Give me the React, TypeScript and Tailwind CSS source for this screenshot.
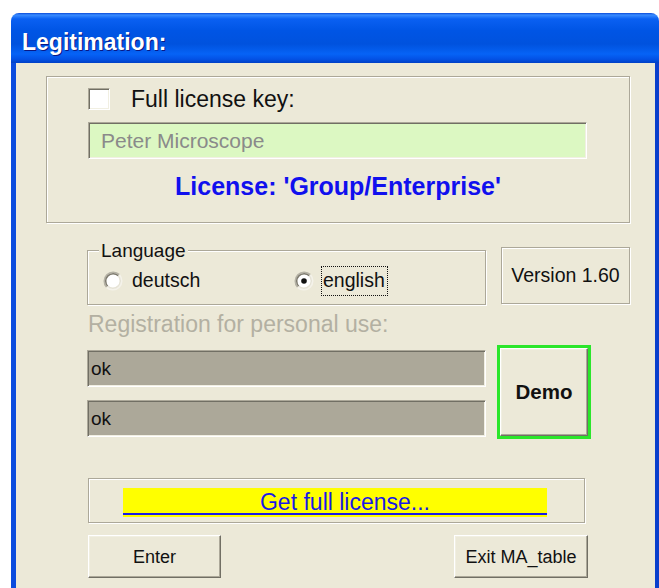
import type { ReactNode } from 'react';

// classic 3D frames
const sunken =
  'border border-t-[#ACA899] border-l-[#ACA899] border-b-white border-r-white shadow-[inset_1px_1px_0_#716F64,inset_-1px_-1px_0_#F1EFE2]';
const raised =
  'border border-t-white border-l-white border-b-[#716F64] border-r-[#716F64] shadow-[inset_-1px_-1px_0_#ACA899,inset_1px_1px_0_#F1EFE2]';
const etched = 'border border-[#ACA899] shadow-[1px_1px_0_#fff,inset_1px_1px_0_#fff]';

function Radio({ checked = false }: { checked?: boolean }) {
  return (
    <svg width="20" height="20" viewBox="0 0 20 20" className="shrink-0">
      <circle cx="10" cy="10" r="8.5" fill="#fff" />
      <path d="M3.64 16.36A9 9 0 0 1 16.36 3.64" fill="none" stroke="#B5B2A5" strokeWidth="1.5" />
      <path d="M16.36 3.64A9 9 0 0 1 3.64 16.36" fill="none" stroke="#F4F2EA" strokeWidth="1.5" />
      <path d="M4.7 15.3A7.5 7.5 0 0 1 15.3 4.7" fill="none" stroke="#7D7A6D" strokeWidth="1.5" />
      <path d="M15.3 4.7A7.5 7.5 0 0 1 4.7 15.3" fill="none" stroke="#E6E3D6" strokeWidth="1.5" />
      {checked && <circle cx="10" cy="10" r="2.8" fill="#111" />}
    </svg>
  );
}

function Button({ children, className = '' }: { children: ReactNode; className?: string }) {
  return (
    <button className={`flex h-[43px] items-center justify-center bg-[#ECE9D8] text-[18px] leading-none ${raised} ${className}`}>
      {children}
    </button>
  );
}

export default function App() {
  return (
    <div className="h-[588px] overflow-hidden bg-white pl-[11px] pt-[13px] font-['Liberation_Sans',Arial,sans-serif] text-[#111]">
      <div className="flex h-[575px] w-[648px] flex-col overflow-hidden rounded-t-[8px]">
        {/* caption */}
        <div className="flex h-[50px] shrink-0 items-center bg-[linear-gradient(to_bottom,#0A4AD8_0%,#3A8CFF_4%,#0A60F2_12%,#0055E5_35%,#0052DE_62%,#0663F6_82%,#0352E6_92%,#0040C6_100%)] pl-[11px] pt-[8px] text-[23px] font-bold leading-none text-white [text-shadow:1px_1px_0_#0A1883]">
          Legitimation:
        </div>

        <div className="flex-1 border-l-[5px] border-r-[4px] border-l-[#0B4CDE] border-r-[#0A3FCC] bg-[#ECE9D8] pt-[13px]">
          {/* license key group */}
          <div className={`ml-[30px] h-[147px] w-[584px] pt-[11px] ${etched}`}>
            <label className="ml-[41px] flex h-[22px] items-center gap-[21px]">
              <span className={`h-[22px] w-[22px] bg-white ${sunken}`} />
              <span className="text-[23px] leading-none">Full license key:</span>
            </label>
            <div className={`ml-[41px] mt-[12px] flex h-[37px] w-[499px] items-center bg-[#DCF8C2] pl-[12px] text-[21px] leading-none text-[#8A8A8A] ${sunken}`}>
              Peter Microscope
            </div>
            <div className="mt-[14px] text-center text-[25px] font-bold leading-[26px] text-[#1010EE]">
              License: 'Group/Enterprise'
            </div>
          </div>

          {/* language + version */}
          <div className="ml-[71px] mt-[18px] flex items-start">
            <fieldset className={`w-[399px] ${etched}`}>
              <legend className="ml-[11px] bg-[#ECE9D8] px-[2px] text-[19px] leading-[19px]">Language</legend>
              <div className="flex h-[44px] items-center pb-[3px] pl-[15px] text-[19.5px] leading-none">
                <div className="flex w-[191px] items-center gap-[9px]">
                  <Radio />
                  <span>deutsch</span>
                </div>
                <div className="flex items-center gap-[7px]">
                  <Radio checked />
                  <span className="flex h-[30px] items-center border border-dotted border-[#111] pl-[1px] pr-[2px]">english</span>
                </div>
              </div>
            </fieldset>
            <div className={`ml-[15px] mt-[6px] flex h-[57px] w-[129px] items-center justify-center pt-[1px] text-[19.5px] leading-none ${etched}`}>
              Version 1.60
            </div>
          </div>

          <div className="ml-[72px] mt-[7px] text-[23px] leading-[24px] text-[#B3B0A2]">Registration for personal use:</div>

          {/* registration fields + demo */}
          <div className="ml-[71px] mt-[9px] flex items-start">
            <div className="mt-[5px] flex w-[399px] flex-col gap-[13px]">
              <div className={`flex h-[37px] items-center bg-[#ACA899] pl-[3px] text-[19px] leading-none ${sunken}`}>ok</div>
              <div className={`flex h-[37px] items-center bg-[#ACA899] pl-[3px] text-[19px] leading-none ${sunken}`}>ok</div>
            </div>
            <div className="ml-[11px] h-[94px] w-[94px] border-[3px] border-[#2BE62B]">
              <button className={`flex h-full w-full items-center justify-center bg-[#ECE9D8] text-[20.5px] font-bold leading-none ${raised}`}>
                Demo
              </button>
            </div>
          </div>

          {/* order link */}
          <div className={`ml-[72px] mt-[39px] h-[45px] w-[497px] pl-[34px] pt-[9px] ${etched}`}>
            <div className="h-[29px] w-[424px] bg-[#FFFF00]">
              <div className="flex h-[27px] items-center justify-center border-b-2 border-[#1A1AE6] pl-[20px] pt-[3px] text-[23px] leading-none text-[#1A1AE6]">
                Get full license...
              </div>
            </div>
          </div>

          <div className="ml-[72px] mt-[12px] flex w-[500px] justify-between">
            <Button className="w-[133px]">Enter</Button>
            <Button className="w-[134px]">Exit MA_table</Button>
          </div>
        </div>
      </div>
    </div>
  );
}
